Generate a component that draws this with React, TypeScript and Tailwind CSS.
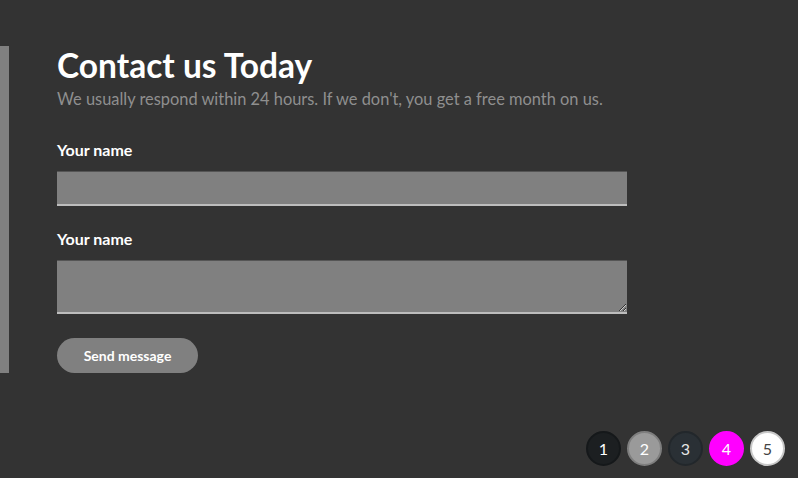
const pages = [
  { n: "1", cls: "bg-[#1c1f21] border-[#15181a] text-white" },
  { n: "2", cls: "bg-[#9a9a9a] border-[#7e7e7e] text-white" },
  { n: "3", cls: "bg-[#2a3035] border-[#22272b] text-[#e6e6e6]" },
  { n: "4", cls: "bg-[#ff00ff] border-[#ff00ff] text-white" },
  { n: "5", cls: "bg-white border-[#c8c8c8] text-[#444]" },
];

const App = () => {
  return (
    <div className="h-[478px] w-full bg-[#333333] flex flex-col font-['Lato',sans-serif] overflow-hidden">
      <section className="mt-[46px] h-[327px] border-l-[9px] border-[#808080] pl-[48px]">
        <h1 className="text-[33.5px] leading-[38px] font-bold text-white">
          Contact us Today
        </h1>
        <p className="mt-[5px] text-[16.4px] leading-[20px] text-[#8f8f8f]">
          We usually respond within 24 hours. If we don't, you get a free month
          on us.
        </p>
        <form className="mt-[31px]">
          <label className="block text-[16px] leading-[20px] font-bold text-white">
            Your name
          </label>
          <input
            type="text"
            className="mt-[11px] block w-[570px] h-[35px] bg-[#808080] border-t border-t-[#555] border-b-2 border-b-[#bdbdbd] outline-none"
          />
          <label className="mt-[23px] block text-[16px] leading-[20px] font-bold text-white">
            Your name
          </label>
          <textarea className="mt-[11px] block w-[570px] h-[54px] bg-[#808080] border-t border-t-[#555] border-b-2 border-b-[#bdbdbd] outline-none" />
          <button
            type="button"
            className="mt-[24px] w-[141px] h-[35px] rounded-full bg-[#808080] text-white text-[14px] font-bold"
          >
            Send message
          </button>
        </form>
      </section>
      <div className="mt-auto mb-[12px] mr-[13px] flex justify-end gap-[6px]">
        {pages.map((p) => (
          <div
            key={p.n}
            className={`w-[35px] h-[35px] rounded-full border-2 flex items-center justify-center text-[16px] ${p.cls}`}
          >
            {p.n}
          </div>
        ))}
      </div>
    </div>
  );
};

export default App;
